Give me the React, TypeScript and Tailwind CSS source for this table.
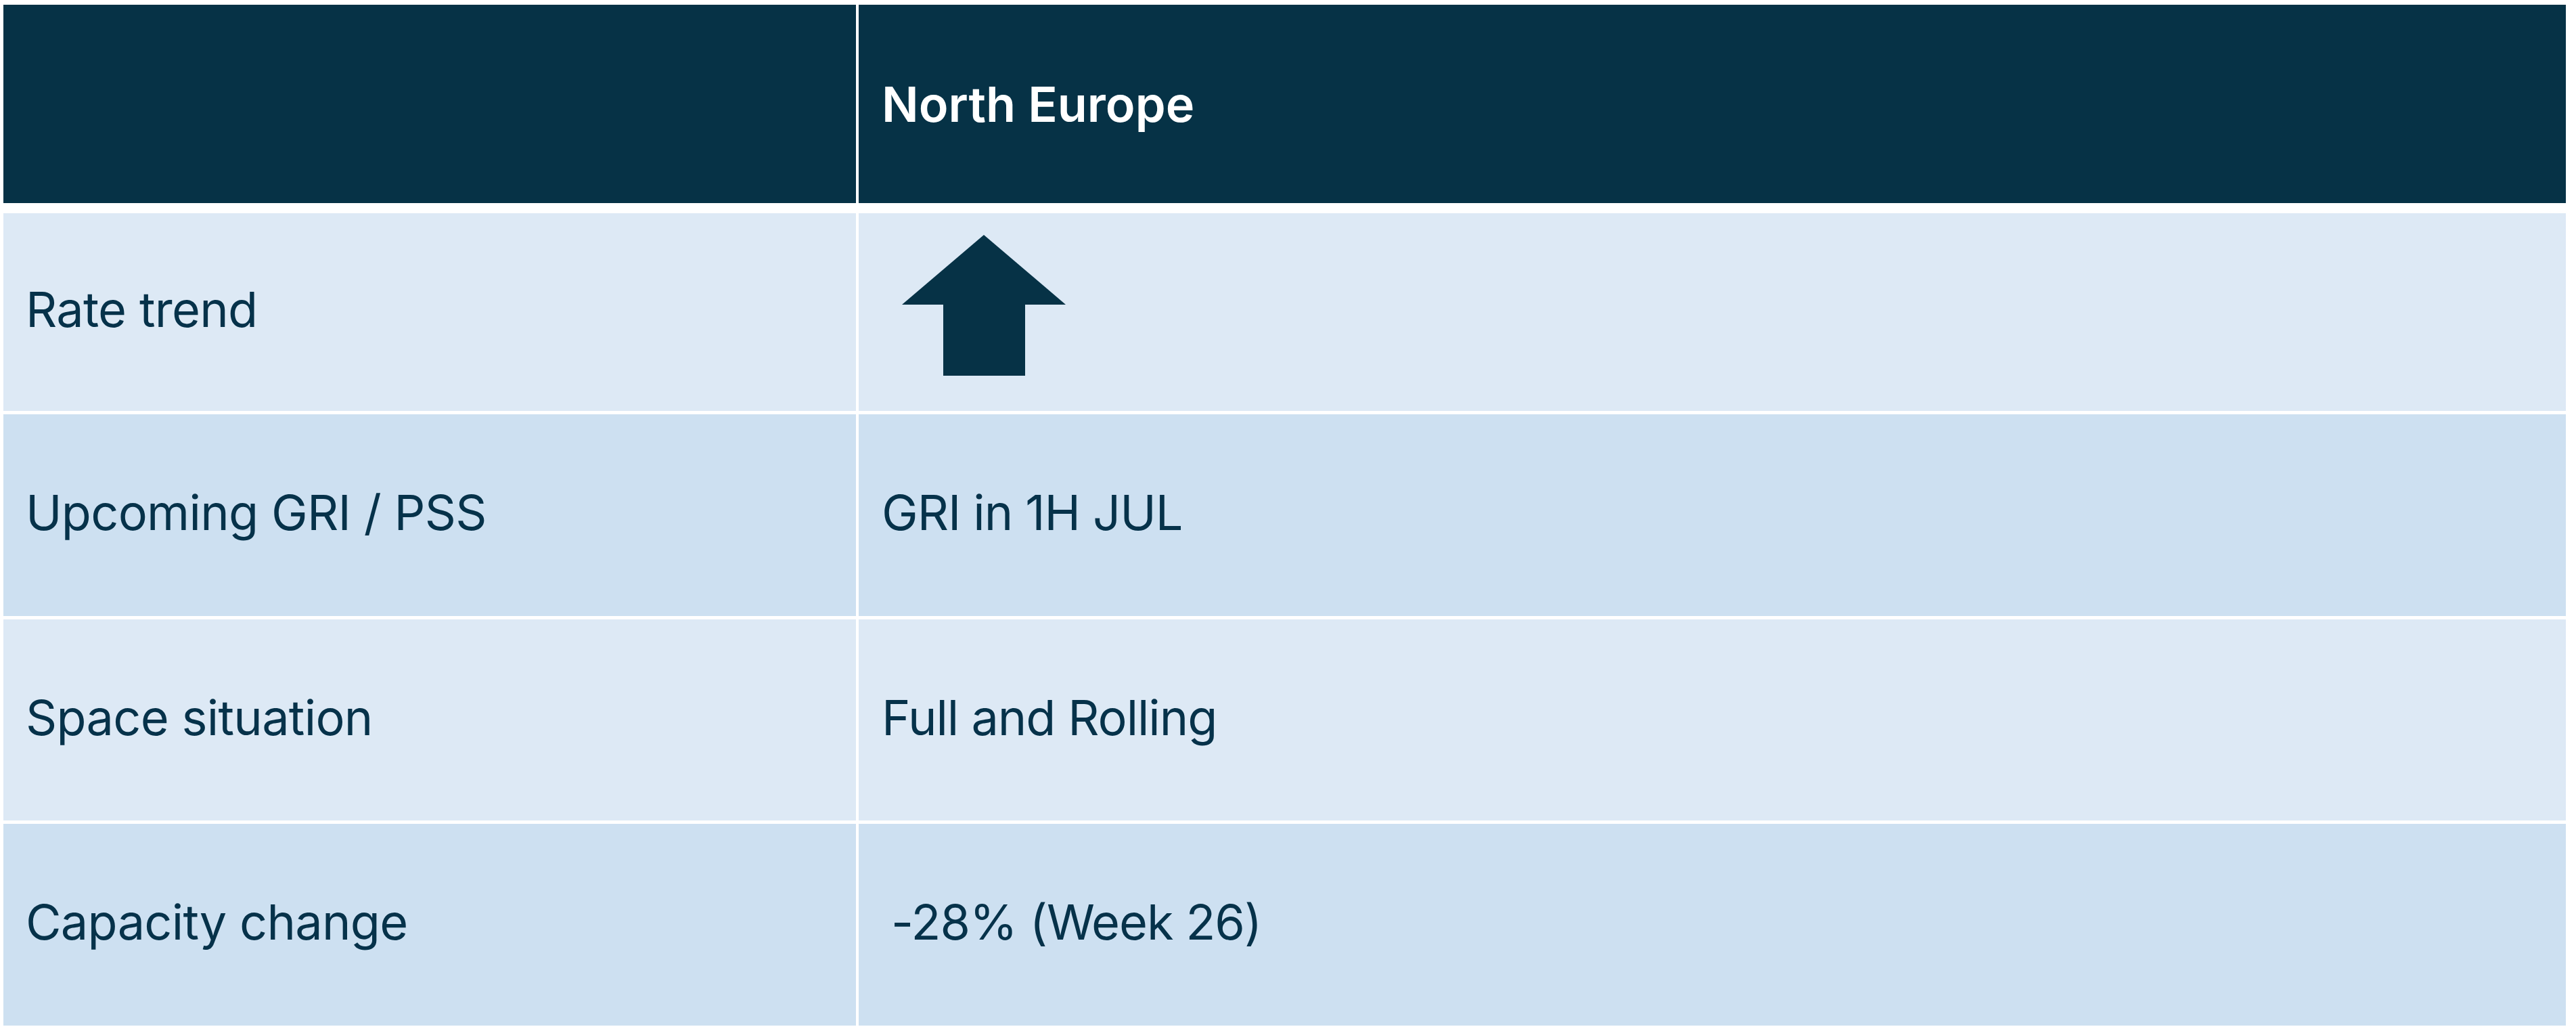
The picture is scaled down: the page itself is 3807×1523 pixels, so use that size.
import React from "react"

const rows = [
  { label: "Rate trend", value: "arrow", tone: "bg-[#dde9f5]", h: "h-[292px]" },
  { label: "Upcoming GRI / PSS", value: "GRI in 1H JUL", tone: "bg-[#cde0f1]", h: "h-[298px]" },
  { label: "Space situation", value: "Full and Rolling", tone: "bg-[#dde9f5]", h: "h-[297px]" },
  { label: "Capacity change", value: "-28% (Week 26)", tone: "bg-[#cde0f1]", h: "h-[298px]" },
]

function UpArrow() {
  return (
    <svg width="242" height="208" viewBox="0 0 242 208" className="ml-[30px] -mt-[12px]">
      <path d="M121 0 L242 103 L182 103 L182 208 L61 208 L61 103 L0 103 Z" fill="#063246" />
    </svg>
  )
}

export default function App() {
  return (
    <div className="min-h-screen bg-white pl-[5px] pt-[7px] pr-[15px] font-['Inter','Noto_Sans',sans-serif] text-[#06324a]">
      <div className="grid grid-cols-[1260px_1fr] gap-x-[4px]">
        {/* header */}
        <div className="h-[293px] bg-[#063246]" />
        <div className="flex h-[293px] items-center bg-[#063246] pl-[34px] text-[72px] font-semibold text-white">
          North Europe
        </div>
      </div>

      <div className="mt-[15px] flex flex-col gap-y-[5px]">
        {rows.map((r) => (
          <div key={r.label} className="grid grid-cols-[1260px_1fr] gap-x-[4px]">
            <div className={`flex items-center pb-[8px] pl-[33px] text-[72px] tracking-[-0.01em] ${r.tone} ${r.h}`}>
              {r.label}
            </div>
            <div className={`flex items-center pb-[8px] pl-[34px] text-[72px] tracking-[-0.015em] ${r.tone} ${r.h}`}>
              {r.value === "arrow" ? (
                <UpArrow />
              ) : r.value.startsWith("-") ? (
                <span className="ml-[14px]">{r.value}</span>
              ) : (
                r.value
              )}
            </div>
          </div>
        ))}
      </div>
    </div>
  )
}
